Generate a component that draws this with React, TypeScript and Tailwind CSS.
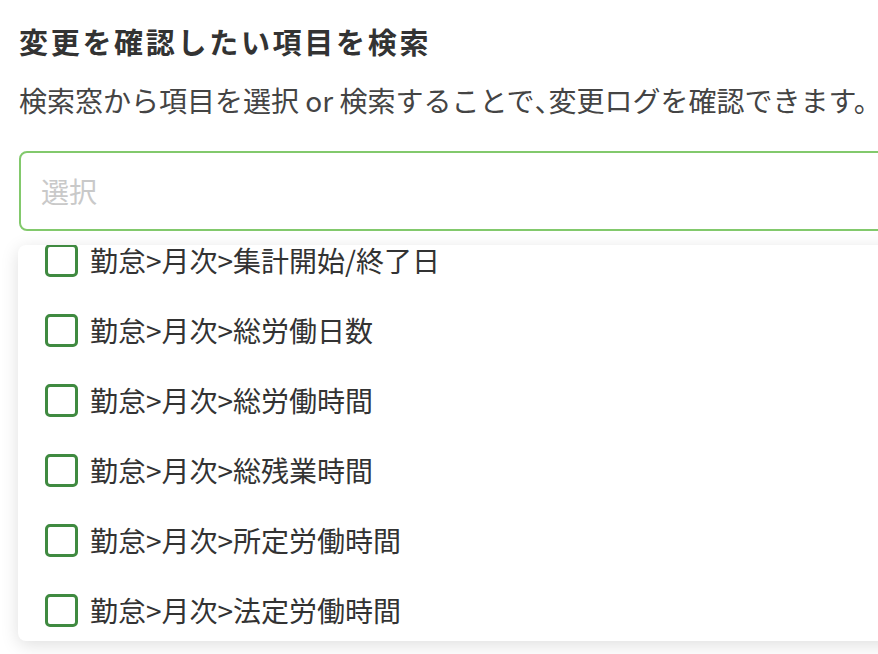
import { useState } from 'react'

const items = [
  '勤怠>月次>集計開始/終了日',
  '勤怠>月次>総労働日数',
  '勤怠>月次>総労働時間',
  '勤怠>月次>総残業時間',
  '勤怠>月次>所定労働時間',
  '勤怠>月次>法定労働時間',
]

export default function App() {
  const [checked, setChecked] = useState<string[]>([])

  const toggle = (label: string) => {
    setChecked((prev) => (prev.includes(label) ? prev.filter((v) => v !== label) : [...prev, label]))
  }

  return (
    <div
      className="h-[654px] w-[878px] overflow-hidden bg-white"
      style={{ fontFamily: '"Noto Sans CJK JP", "Noto Sans", sans-serif' }}
    >
      <div className="w-[960px] pl-[19px] pt-[22px]">
        {/* 見出し */}
        <h1 className="text-[29px] font-bold leading-[38px] tracking-[2.7px] text-[#333]">
          変更を確認したい項目を検索
        </h1>
        <p className="mt-[21px] text-[28px] leading-[38px] text-[#444]">
          検索窓から項目を選択 or 検索することで<span className="[font-feature-settings:'halt']">、</span>変更ログを確認できます。
        </p>

        {/* 検索窓 */}
        <div className="mt-[32px] flex h-[80px] items-center rounded-[8px] border-2 border-[#82c96c] px-[20px]">
          <input
            placeholder="選択"
            className="w-full bg-transparent text-[28px] text-[#333] outline-none placeholder:text-[#c9c9c9]"
          />
        </div>

        {/* 候補リスト */}
        <div className="mt-[14px] -ml-px h-[396px] overflow-hidden rounded-[8px] bg-white shadow-[0_4px_18px_rgba(0,0,0,0.13)]">
          <ul className="-mt-[20px]">
            {items.map((label) => (
              <li
                key={label}
                onClick={() => toggle(label)}
                className="flex h-[70px] cursor-pointer items-center gap-[12px] pl-[27px]"
              >
                <span
                  className={`h-[33px] w-[33px] shrink-0 rounded-[5px] border-[3px] border-[#3f8a40] ${
                    checked.includes(label) ? 'bg-[#3f8a40]' : 'bg-white'
                  }`}
                />
                <span className="text-[28px] text-[#333]">{label}</span>
              </li>
            ))}
          </ul>
        </div>
      </div>
    </div>
  )
}
